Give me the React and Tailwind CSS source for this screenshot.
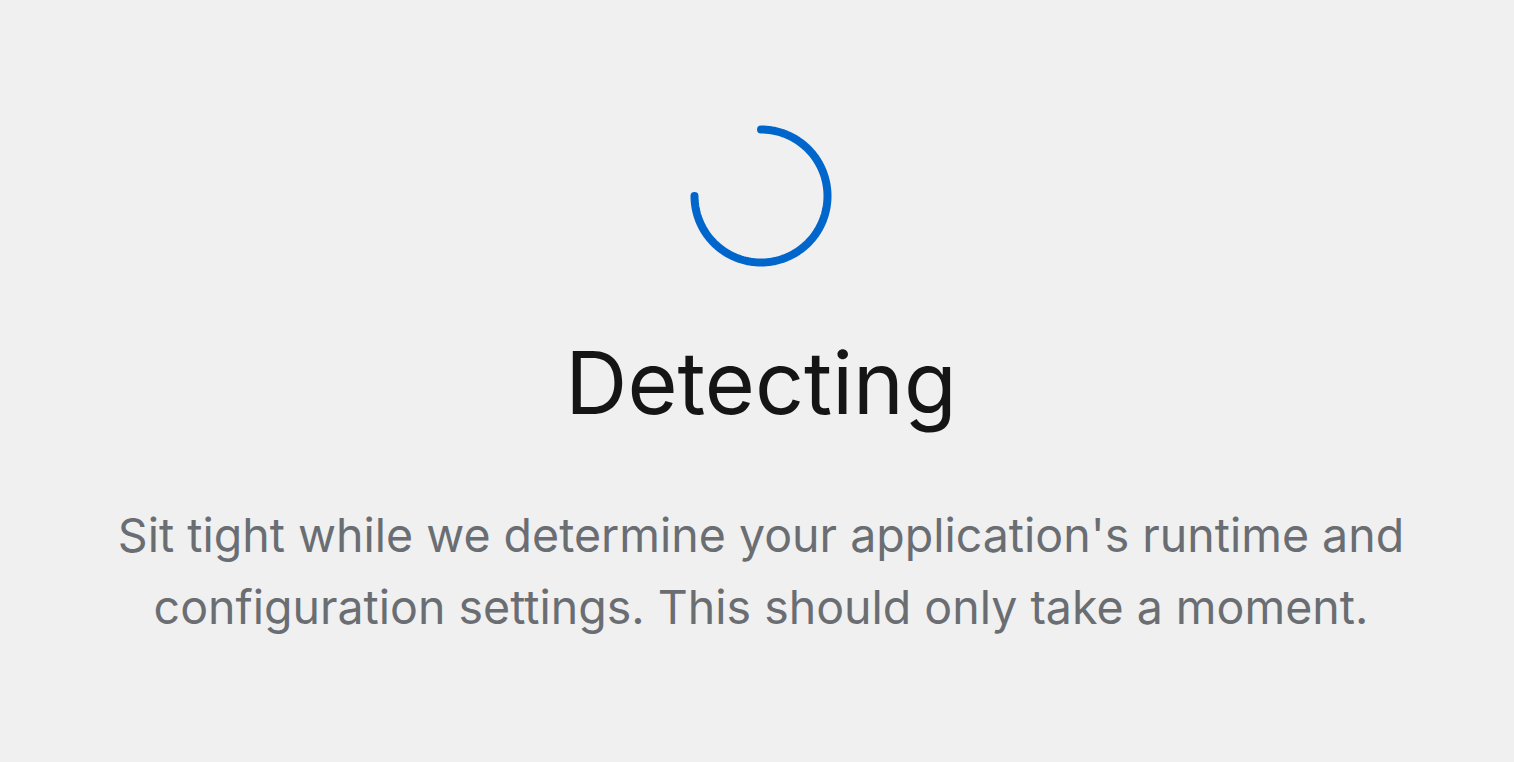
import React from "react";

function Spinner() {
  // 270° arc from 12 o'clock, clockwise to 9 o'clock
  const r = 66.5;
  const pts = [];
  for (let i = 0; i <= 120; i++) {
    const a = -Math.PI / 2 + (i / 120) * 1.5 * Math.PI;
    pts.push(`${(73 + r * Math.cos(a)).toFixed(2)},${(73 + r * Math.sin(a)).toFixed(2)}`);
  }
  return (
    <svg width="146" height="146" viewBox="0 0 146 146" className="block">
      <polyline
        points={pts.join(" ")}
        fill="none"
        stroke="#0066cc"
        strokeWidth="8"
        strokeLinecap="round"
        strokeLinejoin="round"
      />
    </svg>
  );
}

export default function App() {
  return (
    <div className="flex h-screen w-full flex-col items-center bg-[#f0f0f0] pt-[123px] pl-[8px] font-['Inter',sans-serif]">
      <Spinner />
      <h1 className="mt-[63px] text-[86px] leading-[1.2] font-normal text-[#151515]">
        Detecting
      </h1>
      <p className="mt-[64px] text-center text-[46.5px] leading-[72px] text-[#6a6e73]">
        Sit tight while we determine your application's runtime and
        <br />
        configuration settings. This should only take a moment.
      </p>
    </div>
  );
}
